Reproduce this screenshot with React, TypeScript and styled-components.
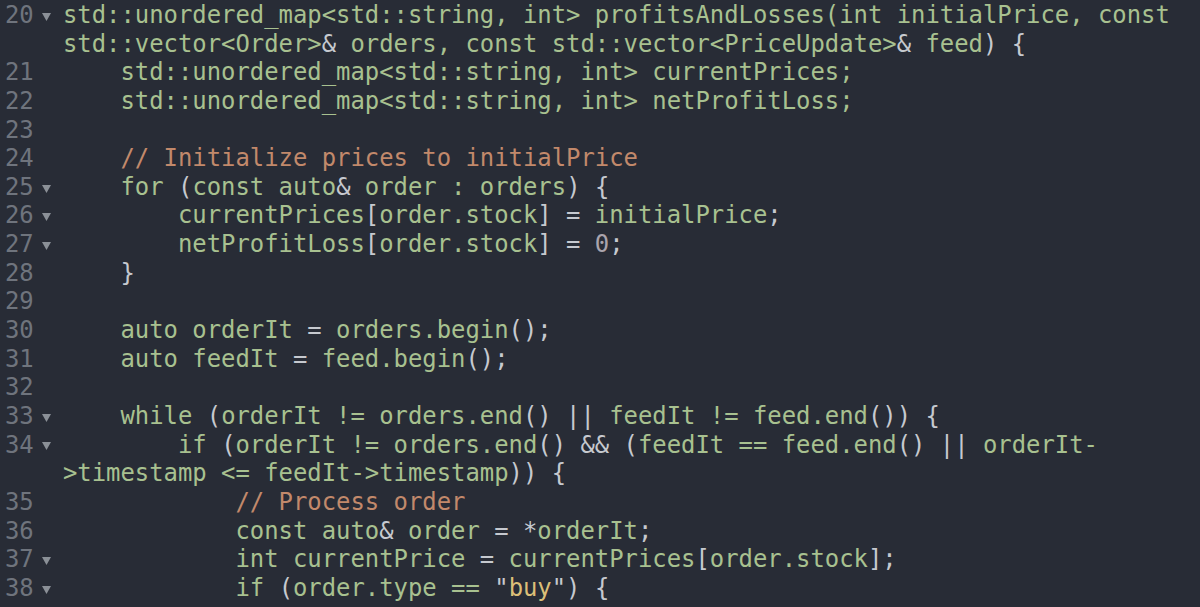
import React from "react";
import styled, { createGlobalStyle } from "styled-components";

const GlobalStyle = createGlobalStyle`
  html, body {
    margin: 0;
    padding: 0;
    background: #282c36;
  }
  #root {
    background: #282c36;
  }
`;

type Kind = "text" | "punct" | "comment" | "string" | "number";

const COLORS: Record<Kind, string> = {
  text: "#a8c190",
  punct: "#c6c9cf",
  comment: "#c2896b",
  string: "#dcbf78",
  number: "#aaa4ad",
};

const Editor = styled.div`
  display: flex;
  flex-direction: column;
  width: 1200px;
  height: 607px;
  overflow: hidden;
  background: #282c36;
  padding-top: 1px;
  box-sizing: border-box;
  font-family: "DejaVu Sans Mono", "Liberation Mono", monospace;
  font-size: 23.88px;
`;

const Row = styled.div`
  display: flex;
  align-items: stretch;
  height: 28.65px;
  line-height: 28.65px;
  flex: none;
`;

const Gutter = styled.div`
  width: 63px;
  flex: none;
  display: flex;
  align-items: center;
  padding-left: 5px;
  box-sizing: border-box;
`;

const LineNo = styled.span`
  width: 29px;
  color: #6f747d;
  text-align: left;
`;

const Fold = styled.svg`
  margin-left: 8px;
  margin-top: 3px;
  width: 9px;
  height: 8px;
  fill: #8b9097;
`;

const Code = styled.div`
  white-space: pre;
  flex: 1;
  color: ${COLORS.text};
`;

const Tok = styled.span<{ $kind: Kind }>`
  color: ${(p) => COLORS[p.$kind]};
`;

interface Line {
  n?: number;
  fold?: boolean;
  text: string;
  greenOpen?: boolean;
  greenSemi?: boolean;
}

const LINES: Line[] = [
  { n: 20, fold: true, greenOpen: true, text: "std::unordered_map<std::string, int> profitsAndLosses(int initialPrice, const" },
  { text: "std::vector<Order>& orders, const std::vector<PriceUpdate>& feed) {" },
  { n: 21, greenSemi: true, text: "    std::unordered_map<std::string, int> currentPrices;" },
  { n: 22, greenSemi: true, text: "    std::unordered_map<std::string, int> netProfitLoss;" },
  { n: 23, text: "" },
  { n: 24, text: "    // Initialize prices to initialPrice" },
  { n: 25, fold: true, text: "    for (const auto& order : orders) {" },
  { n: 26, fold: true, text: "        currentPrices[order.stock] = initialPrice;" },
  { n: 27, fold: true, text: "        netProfitLoss[order.stock] = 0;" },
  { n: 28, text: "    }" },
  { n: 29, text: "" },
  { n: 30, text: "    auto orderIt = orders.begin();" },
  { n: 31, text: "    auto feedIt = feed.begin();" },
  { n: 32, text: "" },
  { n: 33, fold: true, text: "    while (orderIt != orders.end() || feedIt != feed.end()) {" },
  { n: 34, fold: true, text: "        if (orderIt != orders.end() && (feedIt == feed.end() || orderIt-" },
  { text: ">timestamp <= feedIt->timestamp)) {" },
  { n: 35, text: "            // Process order" },
  { n: 36, text: "            const auto& order = *orderIt;" },
  { n: 37, fold: true, text: "            int currentPrice = currentPrices[order.stock];" },
  { n: 38, fold: true, text: "            if (order.type == \"buy\") {" },
];

function tokenize(line: Line): { kind: Kind; s: string }[] {
  const out: { kind: Kind; s: string }[] = [];
  const push = (kind: Kind, s: string) => {
    const last = out[out.length - 1];
    if (last && last.kind === kind) last.s += s;
    else out.push({ kind, s });
  };
  const t = line.text;
  let i = 0;
  while (i < t.length) {
    const two = t.slice(i, i + 2);
    const c = t[i];
    if (two === "//") {
      push("comment", t.slice(i));
      break;
    }
    if (c === '"') {
      const end = t.indexOf('"', i + 1);
      push("punct", '"');
      push("string", t.slice(i + 1, end));
      push("punct", '"');
      i = end + 1;
      continue;
    }
    if (/\d/.test(c) && !/[A-Za-z_0-9]/.test(t[i - 1] || " ")) {
      let j = i;
      while (j < t.length && /\d/.test(t[j])) j++;
      push("number", t.slice(i, j));
      i = j;
      continue;
    }
    if (["!=", "==", "<=", "->", "::"].includes(two)) {
      push("text", two);
      i += 2;
      continue;
    }
    if (["&&", "||", "-="].includes(two)) {
      push("punct", two);
      i += 2;
      continue;
    }
    if ("()[]{}&|*;=".includes(c)) {
      if (c === "(" && line.greenOpen && /[A-Za-z]/.test(t[i - 1] || " ")) push("text", c);
      else if (c === ";" && line.greenSemi) push("text", c);
      else push("punct", c);
      i++;
      continue;
    }
    push("text", c);
    i++;
  }
  return out;
}

const FoldArrow = () => (
  <Fold viewBox="0 0 9 8">
    <polygon points="0,0 9,0 4.5,8" />
  </Fold>
);

export default function App() {
  return (
    <>
      <GlobalStyle />
      <Editor>
        {LINES.map((line, idx) => (
          <Row key={idx}>
            <Gutter>
              <LineNo>{line.n ?? ""}</LineNo>
              {line.fold && <FoldArrow />}
            </Gutter>
            <Code>
              {tokenize(line).map((tk, k) => (
                <Tok key={k} $kind={tk.kind}>
                  {tk.s}
                </Tok>
              ))}
            </Code>
          </Row>
        ))}
      </Editor>
    </>
  );
}
